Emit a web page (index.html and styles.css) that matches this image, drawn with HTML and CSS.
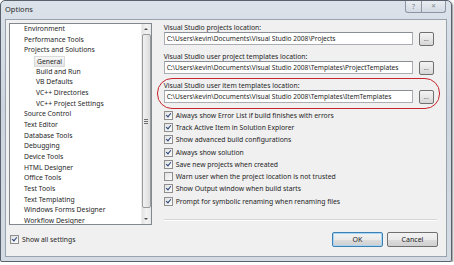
FILE: index.html
```html
<!DOCTYPE html>
<html>
<head>
  <title>Options</title>
  <link rel="stylesheet" href="styles.css">
</head>
<body>
  <div class="window">
    <div class="titlebar">
      <span class="title">Options</span>
      <div class="caption-btns">
        <span class="cbtn help">?</span>
        <span class="cbtn close">&#x2715;</span>
      </div>
    </div>

    <div class="client">
      <div class="main">
        <!-- category tree -->
        <div class="tree-box">
          <ul class="tree">
            <li>Environment</li>
            <li>Performance Tools</li>
            <li>Projects and Solutions</li>
            <li class="sub"><span class="selected">General</span></li>
            <li class="sub">Build and Run</li>
            <li class="sub">VB Defaults</li>
            <li class="sub">VC++ Directories</li>
            <li class="sub">VC++ Project Settings</li>
            <li>Source Control</li>
            <li>Text Editor</li>
            <li>Database Tools</li>
            <li>Debugging</li>
            <li>Device Tools</li>
            <li>HTML Designer</li>
            <li>Office Tools</li>
            <li>Test Tools</li>
            <li>Text Templating</li>
            <li>Windows Forms Designer</li>
            <li>Workflow Designer</li>
          </ul>
          <div class="scrollbar">
            <div class="arrow up"></div>
            <div class="thumb"><span class="grip"></span></div>
            <div class="arrow down"></div>
          </div>
        </div>

        <!-- settings pane -->
        <div class="pane">
          <label class="field-label">Visual Studio projects location:</label>
          <div class="field-row">
            <div class="textbox">C:\Users\kevin\Documents\Visual Studio 2008\Projects</div>
            <button class="browse">...</button>
          </div>

          <label class="field-label">Visual Studio user project templates location:</label>
          <div class="field-row">
            <div class="textbox">C:\Users\kevin\Documents\Visual Studio 2008\Templates\ProjectTemplates</div>
            <button class="browse">...</button>
          </div>

          <label class="field-label">Visual Studio user item templates location:</label>
          <div class="field-row">
            <div class="textbox">C:\Users\kevin\Documents\Visual Studio 2008\Templates\ItemTemplates</div>
            <button class="browse">...</button>
          </div>
          <div class="highlight-ring"></div>

          <ul class="checks">
            <li><span class="cb on"></span>Always show Error List if build finishes with errors</li>
            <li><span class="cb on"></span>Track Active Item in Solution Explorer</li>
            <li><span class="cb on"></span>Show advanced build configurations</li>
            <li><span class="cb on"></span>Always show solution</li>
            <li><span class="cb on"></span>Save new projects when created</li>
            <li><span class="cb"></span>Warn user when the project location is not trusted</li>
            <li><span class="cb on"></span>Show Output window when build starts</li>
            <li><span class="cb on"></span>Prompt for symbolic renaming when renaming files</li>
          </ul>

          <div class="separator"></div>
        </div>
      </div>

      <div class="footer">
        <div class="show-all"><span class="cb on"></span>Show all settings</div>
        <div class="dialog-btns">
          <button class="btn default">OK</button>
          <button class="btn">Cancel</button>
        </div>
      </div>
    </div>
  </div>
</body>
</html>
```

FILE: styles.css
```css
body {
  margin: 0;
  background-color: #fff;
  font-family: "Noto Sans", "DejaVu Sans", sans-serif;
  font-size: 6.8px;
  color: #1e1e1e;
}
ul {
  list-style: none;
  margin: 0;
  padding: 0;
}
.window {
  width: 442px;
  height: 256px;
  padding: 0 4px 4px 4px;
  border: 1px solid #59626c;
  border-radius: 5px 5px 2px 2px;
  background: linear-gradient(#dbe2ea, #ccd5df 40%, #d4dbe3);
  box-shadow: 1px 1px 2px rgba(0, 0, 0, 0.45);
  display: flex;
  flex-direction: column;
}
.titlebar {
  height: 18px;
  display: flex;
  justify-content: space-between;
  align-items: flex-start;
}
.title {
  margin-top: 3px;
  font-size: 7.5px;
  color: #2b2b2b;
}
.caption-btns {
  display: flex;
  margin-right: 1px;
}
.cbtn {
  height: 11px;
  border: 1px solid #8d97a3;
  border-top: none;
  background: linear-gradient(#e9edf1, #d3dae2);
  color: #7a838d;
  font-size: 7px;
  line-height: 11px;
  text-align: center;
}
.cbtn.help {
  width: 15px;
  border-radius: 0 0 0 3px;
}
.cbtn.close {
  width: 23px;
  border-left: none;
  border-radius: 0 0 3px 0;
  font-size: 6px;
}
.client {
  flex: 1;
  border: 1px solid #98a3ae;
  background-color: #f0f0f0;
  padding: 3px 9px 0 3px;
  display: flex;
  flex-direction: column;
}
.main {
  display: flex;
  gap: 12px;
}
.tree-box {
  width: 141px;
  height: 200px;
  border: 1px solid #828790;
  background-color: #fff;
  display: flex;
  overflow: hidden;
}
.tree {
  flex: 1;
  padding: 0 0 0 14px;
}
.tree li {
  height: 10.67px;
  line-height: 10.67px;
  white-space: nowrap;
}
.tree li.sub {
  padding-left: 12px;
}
.tree .selected {
  display: inline-block;
  line-height: 9px;
  padding: 0 2px;
  margin-left: -2px;
  border: 1px solid #d9d9d9;
  background: linear-gradient(#f8f8f8, #e5e5e5);
}
.scrollbar {
  width: 9px;
  background: linear-gradient(90deg, #e3e3e3, #f3f3f3 50%, #e8e8e8);
  border-left: 1px solid #ececec;
  display: flex;
  flex-direction: column;
  align-items: center;
}
.arrow {
  width: 0;
  height: 0;
  margin: 4px 0;
  border-left: 2px solid transparent;
  border-right: 2px solid transparent;
}
.arrow.up {
  border-bottom: 2px solid #4d4d4d;
}
.arrow.down {
  border-top: 2px solid #4d4d4d;
}
.thumb {
  flex: 1;
  width: 7px;
  margin-bottom: 6px;
  border: 1px solid #9a9a9a;
  border-radius: 2px;
  background: linear-gradient(90deg, #f2f2f2, #dcdcdc);
  display: flex;
  align-items: center;
  justify-content: center;
}
.grip {
  width: 4px;
  height: 5px;
  background: repeating-linear-gradient(#6d6d6d 0 1px, transparent 1px 2px);
}
.pane {
  position: relative;
  width: 274px;
  display: flex;
  flex-direction: column;
}
.field-label {
  display: block;
  height: 9px;
  line-height: 9px;
  white-space: nowrap;
}
.field-row {
  display: flex;
  align-items: flex-start;
  gap: 6px;
  height: 14px;
  margin-bottom: 6px;
}
.textbox {
  width: 243px;
  height: 11px;
  padding: 0 2px;
  border: 1px solid #abadb3;
  border-top-color: #8a8e96;
  background-color: #fff;
  font-size: 6.6px;
  line-height: 11px;
  white-space: nowrap;
  overflow: hidden;
}
.browse {
  width: 15px;
  height: 14px;
  padding: 0;
  border: 1px solid #707070;
  border-radius: 2px;
  background: linear-gradient(#f4f4f4, #e6e6e6 50%, #d6d6d6);
  font-family: inherit;
  font-size: 6px;
  line-height: 8px;
  color: #333;
}
.highlight-ring {
  position: absolute;
  left: -7px;
  top: 55px;
  width: 281px;
  height: 29px;
  border: 1.5px solid #c6262d;
  border-radius: 15px;
}
.checks {
  margin-top: -1px;
}
.checks li {
  height: 12.3px;
  display: flex;
  align-items: center;
  white-space: nowrap;
}
.cb {
  width: 7px;
  height: 7px;
  margin-right: 3px;
  border: 1px solid #8f8f8f;
  background: linear-gradient(135deg, #e2e2e2, #fbfbfb);
  position: relative;
  flex: none;
}
.cb.on::after {
  content: "";
  position: absolute;
  left: 2px;
  top: 0;
  width: 2px;
  height: 4px;
  border: solid #26447a;
  border-width: 0 1.5px 1.5px 0;
  transform: rotate(40deg);
}
.separator {
  margin-top: 12px;
  height: 1px;
  background-color: #d5d5d5;
  border-bottom: 1px solid #fff;
}
.footer {
  margin-top: 7px;
  display: flex;
  justify-content: space-between;
  align-items: center;
}
.show-all {
  display: flex;
  align-items: center;
  margin-left: 1px;
}
.dialog-btns {
  display: flex;
  gap: 4px;
  margin-right: -1px;
}
.btn {
  width: 51px;
  height: 15px;
  padding: 0;
  border: 1px solid #707070;
  border-radius: 2px;
  background: linear-gradient(#f2f2f2, #ebebeb 50%, #dddddd 51%, #cfcfcf);
  font-family: inherit;
  font-size: 7px;
  color: #1e1e1e;
}
.btn.default {
  border-color: #3c7fb1;
  box-shadow: inset 0 0 0 1px #a6d5f5;
}
```
